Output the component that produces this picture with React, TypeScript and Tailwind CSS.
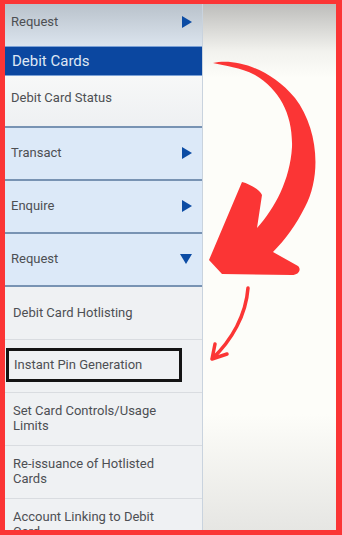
import type { JSX } from 'react';

type Row = {
  label: string;
  kind: 'menu' | 'sub';
  arrow?: 'right' | 'down';
  boxed?: boolean;
};

const rows: Row[] = [
  { label: 'Transact', kind: 'menu', arrow: 'right' },
  { label: 'Enquire', kind: 'menu', arrow: 'right' },
  { label: 'Request', kind: 'menu', arrow: 'down' },
  { label: 'Debit Card Hotlisting', kind: 'sub' },
  { label: 'Instant Pin Generation', kind: 'sub', boxed: true },
  { label: 'Set Card Controls/Usage Limits', kind: 'sub' },
  { label: 'Re-issuance of Hotlisted Cards', kind: 'sub' },
  { label: 'Account Linking to Debit Card', kind: 'sub' },
];

function Caret({ dir }: { dir: 'right' | 'down' }): JSX.Element {
  return dir === 'right' ? (
    <svg width="10" height="12" viewBox="0 0 10 12" className="fill-[#0c4ca4]">
      <path d="M0 0 L10 6 L0 12 Z" />
    </svg>
  ) : (
    <svg width="12" height="10" viewBox="0 0 12 10" className="fill-[#0c4ca4]">
      <path d="M0 0 L12 0 L6 10 Z" />
    </svg>
  );
}

function MenuRow({ row }: { row: Row }): JSX.Element {
  if (row.kind === 'menu') {
    return (
      <div className="flex h-[53px] shrink-0 items-center justify-between border-b-2 border-[#7893b3] bg-[#dce9f8] pl-[6px] pr-[10px] pb-[2px]">
        <span className="text-[13px] text-[#4d4f53]">{row.label}</span>
        {row.arrow && <Caret dir={row.arrow} />}
      </div>
    );
  }
  return (
    <div className="flex h-[53px] shrink-0 items-center border-b border-[#d9dce0] bg-[#eff1f3] pl-[8px] pr-[20px] pb-[2px]">
      {row.boxed ? (
        <span className="-ml-[7px] flex h-[34px] w-[176px] items-center border-[3px] border-[#141414] pl-[5px] text-[13px] text-[#4d4f53]">
          {row.label}
        </span>
      ) : (
        <span className="text-[13px] leading-[15px] text-[#4d4f53]">{row.label}</span>
      )}
    </div>
  );
}

export default function App(): JSX.Element {
  return (
    <div className="relative flex h-[535px] w-[342px] overflow-hidden border-t-[4px] border-r-[6px] border-b-[5px] border-l-[5px] border-[#fb3535] font-['Roboto','Liberation_Sans',sans-serif]">
      <div className="flex w-[198px] shrink-0 flex-col overflow-hidden border-r border-[#c9d3de]">
        <div className="flex h-[42px] shrink-0 items-center justify-between bg-[linear-gradient(#b9c2cb,#dbe4ee)] pl-[6px] pr-[10px] pb-[6px]">
          <span className="text-[13px] text-[#4d4f53]">Request</span>
          <Caret dir="right" />
        </div>
        <div className="flex h-[30px] shrink-0 items-center border-y border-[#7ba1d6] bg-[#0b47a0] pl-[7px]">
          <span className="text-[15px] text-[#dfe7f4]">Debit Cards</span>
        </div>
        <div className="flex h-[52px] shrink-0 items-center border-b-2 border-[#7893b3] bg-[linear-gradient(#f7f8f8,#eef0f2)] pl-[6px] pb-[6px]">
          <span className="text-[13px] text-[#4d4f53]">Debit Card Status</span>
        </div>
        {rows.map((r) => (
          <MenuRow key={r.label} row={r} />
        ))}
      </div>
      <div className="flex-1 bg-[linear-gradient(#bdbdbb_0%,#f2f2ee_9%,#fdfdf9_14%,#fdfdf9_78%,#e6e6e3_100%)]" />
      <svg
        className="pointer-events-none absolute -left-[5px] -top-[4px]"
        width="342"
        height="535"
        viewBox="0 0 342 535"
      >
        <path
          className="fill-[#fb3535]"
          d="M213 63 C235 58 270 68 295 98 C318 128 322 175 305 207 C296 225 285 240 273 252 L298 266 C302 270 298 275 292 275 L222 274 L209 260 L242 182 C250 184 260 190 262 195 L257 228 C275 208 290 180 292 147 C293 115 280 90 255 75 C240 67 225 66 213 63 Z"
        />
        <path
          d="M248 288 C246 315 232 340 212 359 M212 359 L215 344 M212 359 L227 354"
          fill="none"
          stroke="#fb3535"
          strokeWidth="3.5"
          strokeLinecap="round"
        />
      </svg>
    </div>
  );
}
